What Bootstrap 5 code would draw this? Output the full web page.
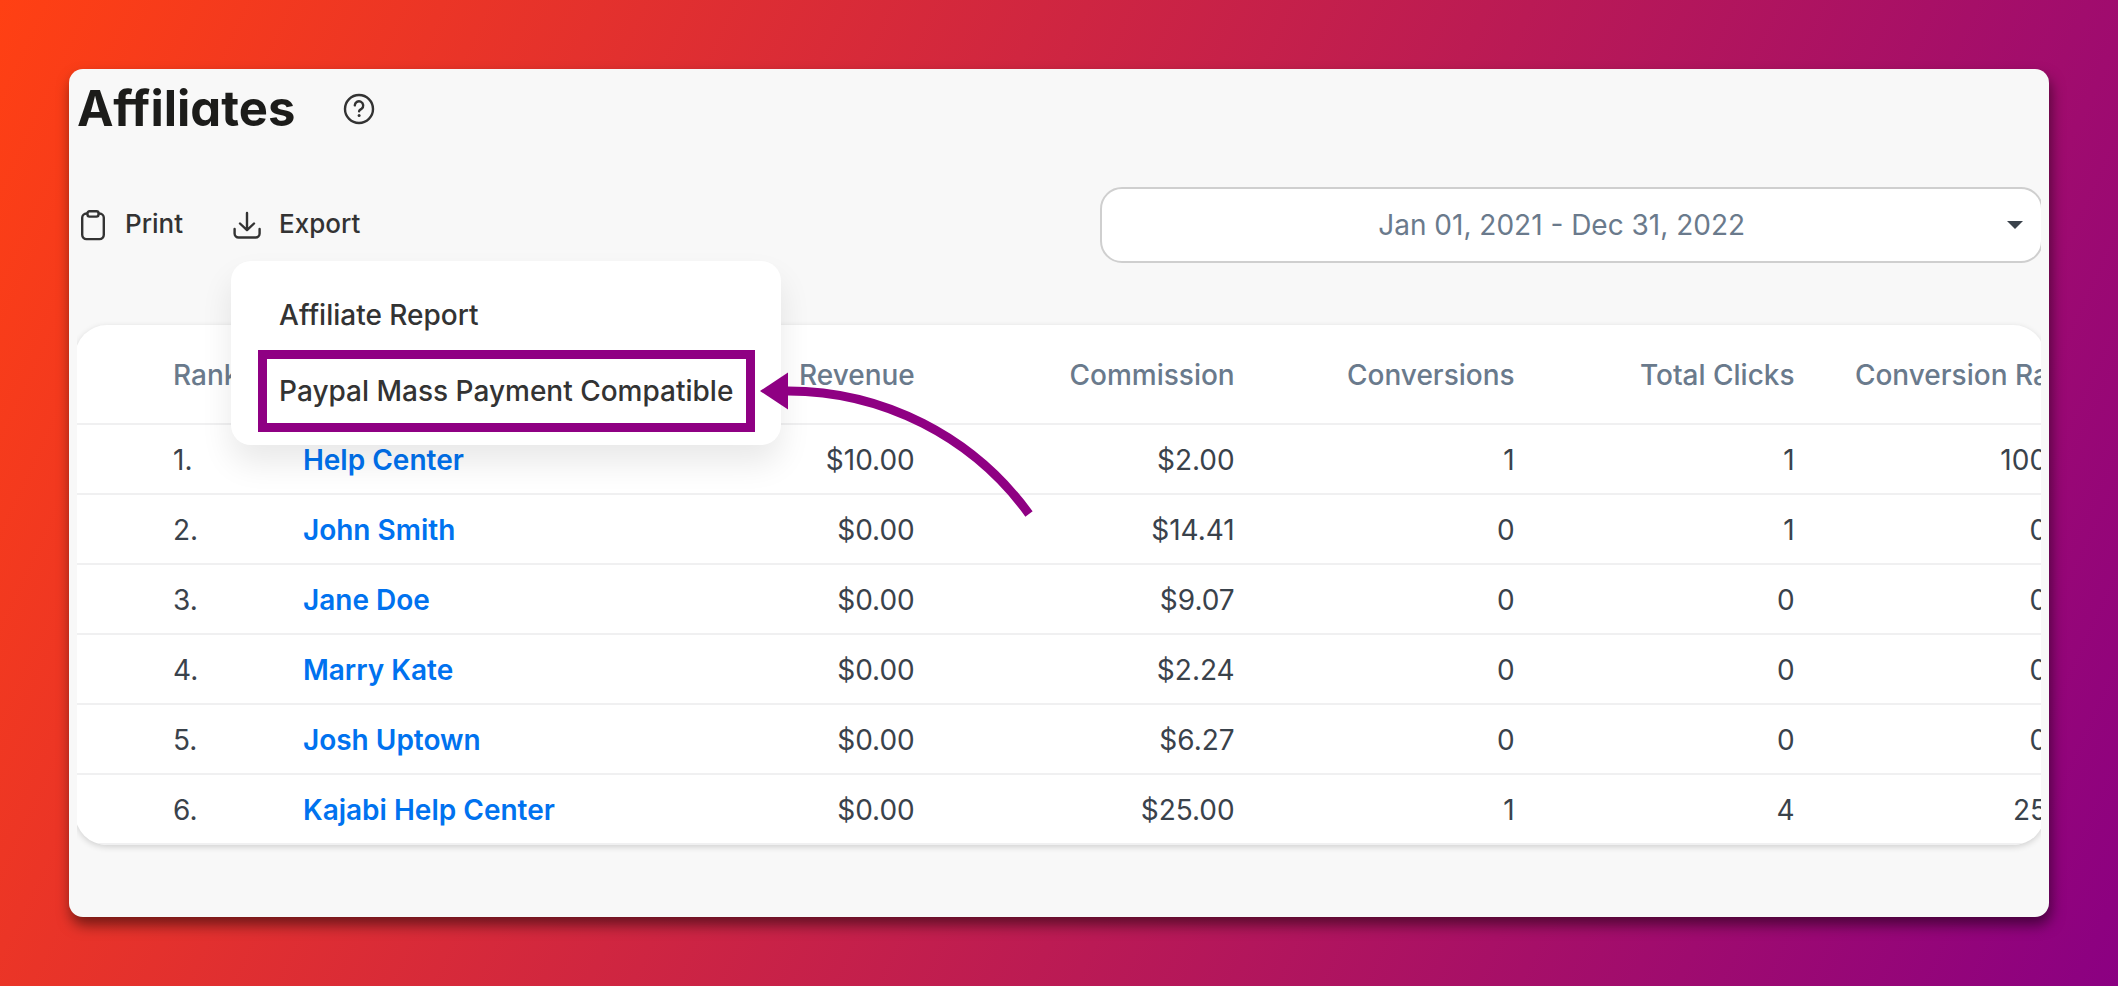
<!DOCTYPE html>
<html lang="en">
<head>
<meta charset="utf-8">
<meta name="viewport" content="width=device-width, initial-scale=1">
<title>Affiliates</title>
<link href="https://cdn.jsdelivr.net/npm/bootstrap@5.3.0/dist/css/bootstrap.min.css" rel="stylesheet">
<style>
  body {
    font-family: Inter, "Liberation Sans", sans-serif;
    font-size: 28px;
    line-height: 36px;
    font-variant-ligatures: no-contextual;
    color: #3a424b;
    background: linear-gradient(115deg, #ff4013, #8b0082) no-repeat;
    min-height: 100vh;
    padding: 69px;
  }
  .stage {
    background: #f8f8f8;
    border-radius: 14px;
    padding: 0 8px;
    box-shadow: 2px 8px 14px rgba(0, 0, 0, .5);
  }
  .stage-inner { overflow: hidden; padding-bottom: 72px; }

  .page-head { height: 118px; padding-top: 8px; gap: 48px; }
  .page-title {
    font-size: 49px;
    line-height: 64px;
    font-weight: 700;
    color: #1c1c1a;
    font-feature-settings: "cv11";
  }
  .plain-btn { border: 0; background: none; padding: 0; color: #333; }
  .plain-btn svg { display: block; flex: none; }

  .toolbar { height: 76px; }
  .tool-group { gap: 48px; }
  .tool-btn { display: flex; align-items: center; gap: 16px; font-size: 26px; line-height: 36px; font-weight: 500; }
  .tool-btn span { padding-bottom: 2px; }
  .range-wrap { width: 48%; margin-right: -2px; }
  .range-btn {
    height: 76px;
    border: 2px solid #cfcfcf;
    border-radius: 22px;
    background: #fff;
    color: #6a7a8c;
    padding: 0 18px 0 14px;
  }

  .export-menu {
    position: absolute;
    top: 55px;
    left: 0;
    width: 550px;
    padding: 16px 0;
    border: 0;
    border-radius: 20px;
    box-shadow: 0 18px 32px rgba(0, 0, 0, .09);
    font-size: 28px;
  }
  .export-menu .dropdown-item { padding: 20px 48px; font-weight: 500; color: #333; }
  .callout-box { position: absolute; inset: -3px 26px -3px 27px; border: 9px solid #8f0083; pointer-events: none; }
  .callout-arrow { position: absolute; left: 529px; top: 104px; pointer-events: none; }

  .report-card {
    margin: 62px -4px 0 -2px;
    border-radius: 32px;
    background: #fff;
    overflow: hidden;
    box-shadow: 0 2px 6px rgba(0, 0, 0, .16);
  }
  .report-table { table-layout: fixed; border-collapse: separate; border-spacing: 0; width: 101.5%; margin: 0; }
  .report-table > :not(caption) > * > * {
    padding: 2px 0 0;
    height: 70px;
    vertical-align: middle;
    text-align: right;
    white-space: nowrap;
    border-bottom: 2px solid #f0f0f1;
    background: none;
    color: #3a424b;
  }
  .report-table > thead > tr > th { height: 100px; font-weight: 500; color: #6a7a8c; }
  .report-table > :not(caption) > * > :first-child { text-align: left; padding-left: 98px; }
  .report-table > :not(caption) > * > :nth-child(2) { text-align: left; }
  .report-table a { color: #0072ef; font-weight: 600; text-decoration: none; }
  .col-rank { width: 11.4%; }
  .col-name { width: 19.35%; }
  .col-revenue { width: 11.25%; }
  .col-commission { width: 16%; }
</style>
</head>
<body>
<main class="stage">
  <div class="stage-inner">
    <header class="page-head d-flex align-items-start">
      <h1 class="page-title m-0">Affiliates</h1>
      <button class="plain-btn mt-3" type="button" aria-label="Help">
        <svg width="32" height="32" viewBox="0 0 32 32" fill="none" stroke="#333" stroke-width="2.4" stroke-linecap="round">
          <circle cx="16" cy="16" r="14"/>
          <path d="M11.8 12.4a4.2 4.2 0 1 1 6.800 3.400c-1.600 1.100-2.500 1.400-2.500 2.500"/>
          <circle cx="16.100" cy="22.600" r="1.500" fill="#333" stroke="none"/>
        </svg>
      </button>
    </header>

    <div class="toolbar d-flex justify-content-between align-items-center">
      <div class="tool-group d-flex">
        <button class="plain-btn tool-btn" type="button">
          <svg width="32" height="32" viewBox="0 0 32 32" fill="none" stroke="#333" stroke-width="2.4" stroke-linejoin="round">
            <path d="M10.500 4.500H9.500a4.300 4.300 0 0 0-4.300 4.300v17a4.300 4.300 0 0 0 4.300 4.300h13a4.300 4.300 0 0 0 4.300-4.300v-17a4.300 4.300 0 0 0-4.300-4.300h-1"/>
            <rect x="10.500" y="2.200" width="11" height="5.400" rx="2"/>
          </svg>
          <span>Print</span>
        </button>
        <div class="dropdown">
          <button class="plain-btn tool-btn" type="button" aria-expanded="true">
            <svg width="32" height="32" viewBox="0 0 32 32" fill="none" stroke="#333" stroke-width="2.4" stroke-linecap="round" stroke-linejoin="round">
              <path d="M16 4v17M9 14.500l7 6.700 7-6.700M3.600 20v4.500a4 4 0 0 0 4 4h17a4 4 0 0 0 4-4V20"/>
            </svg>
            <span>Export</span>
          </button>
          <div class="dropdown-menu show export-menu">
            <a class="dropdown-item" href="#">Affiliate Report</a>
            <div class="position-relative">
              <a class="dropdown-item" href="#">Paypal Mass Payment Compatible</a>
              <div class="callout-box"></div>
            </div>
            <svg class="callout-arrow" width="280" height="160" viewBox="0 0 280 160">
              <path d="M0 26L28 7.500v37z" fill="#8f0083"/>
              <path d="M27 26A298 298 0 0 1 269 149" fill="none" stroke="#8f0083" stroke-width="9"/>
            </svg>
          </div>
        </div>
      </div>
      <div class="range-wrap">
        <button class="range-btn w-100 d-flex align-items-center" type="button">
          <span class="flex-fill">Jan 01, 2021 - Dec 31, 2022</span>
          <svg width="16" height="8" viewBox="0 0 16 8"><path d="M0 0h16L8 8z" fill="#3a424b"/></svg>
        </button>
      </div>
    </div>

    <div class="report-card">
      <table class="report-table table">
        <colgroup><col class="col-rank"><col class="col-name"><col class="col-revenue"><col class="col-commission"><col><col><col></colgroup>
        <thead>
          <tr><th>Rank</th><th aria-label="Name"></th><th>Revenue</th><th>Commission</th><th>Conversions</th><th>Total Clicks</th><th>Conversion Rate</th></tr>
        </thead>
        <tbody>
          <tr><td>1.</td><td><a href="#">Help Center</a></td><td>$10.00</td><td>$2.00</td><td>1</td><td>1</td><td>100%</td></tr>
          <tr><td>2.</td><td><a href="#">John Smith</a></td><td>$0.00</td><td>$14.41</td><td>0</td><td>1</td><td>0%</td></tr>
          <tr><td>3.</td><td><a href="#">Jane Doe</a></td><td>$0.00</td><td>$9.07</td><td>0</td><td>0</td><td>0%</td></tr>
          <tr><td>4.</td><td><a href="#">Marry Kate</a></td><td>$0.00</td><td>$2.24</td><td>0</td><td>0</td><td>0%</td></tr>
          <tr><td>5.</td><td><a href="#">Josh Uptown</a></td><td>$0.00</td><td>$6.27</td><td>0</td><td>0</td><td>0%</td></tr>
          <tr><td>6.</td><td><a href="#">Kajabi Help Center</a></td><td>$0.00</td><td>$25.00</td><td>1</td><td>4</td><td>25%</td></tr>
        </tbody>
      </table>
    </div>
  </div>
</main>
<script src="https://cdn.jsdelivr.net/npm/bootstrap@5.3.0/dist/js/bootstrap.bundle.min.js"></script>
</body>
</html>
